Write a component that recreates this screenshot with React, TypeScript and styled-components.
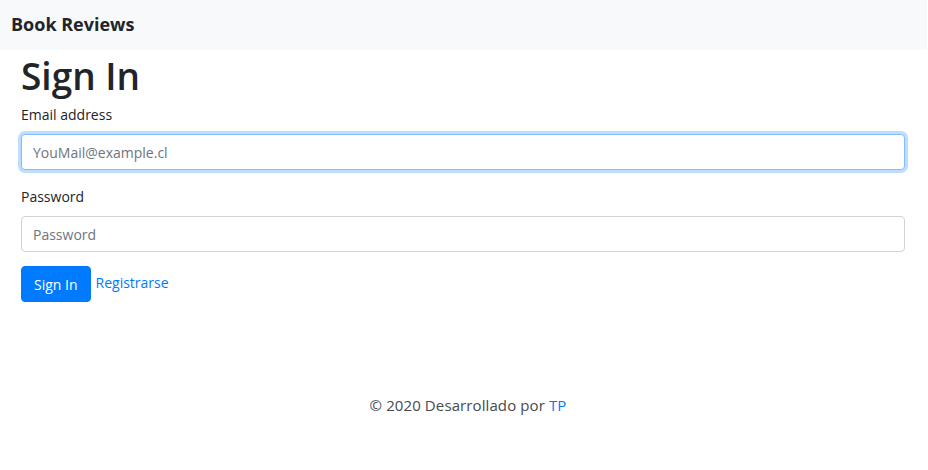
import React from "react";
import styled, { createGlobalStyle } from "styled-components";

const Global = createGlobalStyle`
  html, body { margin: 0; padding: 0; background: #fff; }
  body {
    font-family: "Open Sans", "Noto Sans", Arial, sans-serif;
    color: #212529;
    font-size: 15px;
    line-height: 1.5;
  }
  * { box-sizing: border-box; }
`;

const Page = styled.div`
  display: flex;
  flex-direction: column;
  min-height: 470px;
`;

const NavBar = styled.nav`
  height: 50px;
  background: #f8f9fa;
  display: flex;
  align-items: center;
  padding: 0 11px;
  margin-right: 1px;
`;

const Brand = styled.a`
  font-size: 18px;
  font-weight: 700;
  color: #212529;
  text-decoration: none;
  margin-top: -1px;
`;

const Main = styled.main`
  padding: 0 23px 0 21px;
`;

const Title = styled.h1`
  margin: 4px 0 6px;
  font-size: 37px;
  font-weight: 600;
  line-height: 1.2;
`;

const Group = styled.div`
  display: flex;
  flex-direction: column;
  margin-bottom: 16px;
`;

const Label = styled.label`
  font-size: 14px;
  line-height: 22px;
  margin-bottom: 8px;
`;

const Input = styled.input<{ $focus?: boolean }>`
  height: 36px;
  padding: 0 11px;
  font-family: inherit;
  font-size: 14px;
  color: #495057;
  border: 1px solid ${(p) => (p.$focus ? "#80bdff" : "#ced4da")};
  border-radius: 4px;
  outline: none;
  box-shadow: ${(p) => (p.$focus ? "0 0 0 3px rgba(0,123,255,.25)" : "none")};
  &::placeholder { color: #6c757d; }
`;

const Actions = styled.div`
  display: flex;
  align-items: center;
  gap: 5px;
  margin-top: -2px;
`;

const Button = styled.button`
  height: 36px;
  padding: 0 12px;
  font-family: inherit;
  font-size: 14px;
  color: #fff;
  background: #007bff;
  border: 1px solid #007bff;
  border-radius: 4px;
`;

const Link = styled.a`
  color: #007bff;
  font-size: 14px;
  text-decoration: none;
`;

const ActionLink = styled(Link)`
  margin-top: -4px;
`;

const Footer = styled.footer`
  text-align: center;
  font-size: 15px;
  color: #454a4f;
  margin-top: 92px;
  padding-left: 8px;
  letter-spacing: 0.1px;
`;

const FooterLink = styled(Link)`
  font-size: 15px;
`;

export default function App() {
  return (
    <>
      <Global />
      <Page>
        <NavBar>
          <Brand href="#">Book Reviews</Brand>
        </NavBar>
        <Main>
          <Title>Sign In</Title>
          <Group>
            <Label>Email address</Label>
            <Input $focus type="email" placeholder="YouMail@example.cl" />
          </Group>
          <Group>
            <Label>Password</Label>
            <Input type="password" placeholder="Password" />
          </Group>
          <Actions>
            <Button>Sign In</Button>
            <ActionLink href="#">Registrarse</ActionLink>
          </Actions>
        </Main>
        <Footer>
          © 2020 Desarrollado por <FooterLink href="#">TP</FooterLink>
        </Footer>
      </Page>
    </>
  );
}
